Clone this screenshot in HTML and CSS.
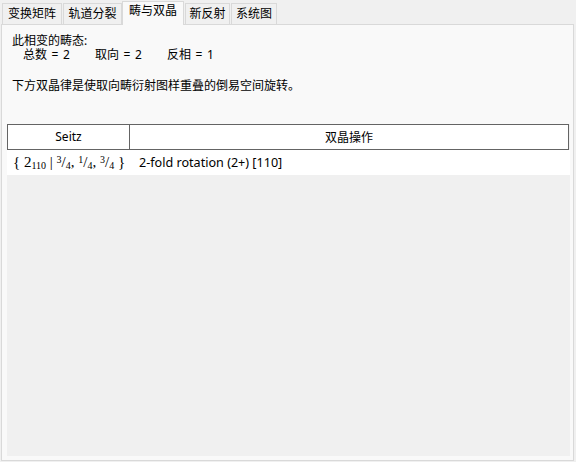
FILE: index.html
```html
<!DOCTYPE html>
<html>
<head>
<meta charset="utf-8">
<link rel="stylesheet" href="styles.css">
</head>
<body>
<div class="window">
  <div class="tabs">
    <div class="tab t1">变换矩阵</div>
    <div class="tab t2">轨道分裂</div>
    <div class="tab t3 active">畴与双晶</div>
    <div class="tab t4">新反射</div>
    <div class="tab t5">系统图</div>
  </div>
  <div class="pane">
    <div class="info">
      <div class="line">此相变的畴态:</div>
      <div class="line counts"><span class="c1">总数 = 2</span><span class="c2">取向 = 2</span><span class="c3">反相 = 1</span></div>
    </div>
    <div class="desc">下方双晶律是使取向畴衍射图样重叠的倒易空间旋转。</div>
    <div class="list">
      <div class="head">
        <div class="hcell seitz">Seitz</div>
        <div class="hcell op">双晶操作</div>
      </div>
      <div class="row">
        <div class="cell seitz-val"><span class="math">{ 2<sub>110</sub> | <sup>3</sup>/<sub>4</sub>, <sup>1</sup>/<sub>4</sub>, <sup>3</sup>/<sub>4</sub> }</span></div>
        <div class="cell op-val">2-fold rotation (2+) [110]</div>
      </div>
      <div class="empty"></div>
    </div>
  </div>
  <svg class="grip" width="4" height="4" viewBox="0 0 4 4"><rect x="2" y="0" width="1" height="1" fill="#555"/><rect x="0" y="2" width="1" height="1" fill="#555"/><rect x="2" y="2" width="1" height="1" fill="#555"/></svg>
</div>
</body>
</html>
```
FILE: styles.css
```css
html, body {
  margin: 0;
  padding: 0;
  background: #f0f0f0;
}
body {
  width: 576px;
  height: 462px;
  overflow: hidden;
  font-family: "Noto Sans", "Noto Sans CJK SC", sans-serif;
  font-size: 12px;
  color: #000;
}
.window {
  position: relative;
  width: 576px;
  height: 462px;
}
.tabs {
  display: flex;
  align-items: flex-end;
  height: 24px;
  padding-left: 2px;
  box-sizing: border-box;
}
.tab {
  box-sizing: border-box;
  height: 21px;
  border: 1px solid #d9d9d9;
  border-bottom: none;
  background: #f0f0f0;
  display: flex;
  align-items: center;
  justify-content: center;
  line-height: 14px;
  padding-bottom: 1px;
}
.t1 { width: 60px; }
.t2 { width: 59px; margin-left: 1px; }
.t3 { width: 62px; margin-left: 0; }
.t4 { width: 45px; margin-left: 1px; }
.t5 { width: 46px; margin-left: 1px; }
.tab.active {
  height: 24px;
  margin-bottom: -1px;
  background: #f9f9f9;
  position: relative;
  z-index: 2;
  padding-bottom: 5px;
}
.pane {
  box-sizing: border-box;
  margin-left: 1px;
  width: 573px;
  height: 437px;
  border: 1px solid #d9d9d9;
  background: #f9f9f9;
  display: flex;
  flex-direction: column;
  position: relative;
  z-index: 1;
}
.info {
  padding: 9px 0 0 10px;
  line-height: 14px;
}
.counts {
  display: flex;
  padding-left: 11px;
  word-spacing: 1.5px;
}
.c1 { width: 72px; }
.c2 { width: 72px; }
.desc {
  padding: 17px 0 0 10px;
  line-height: 14px;
}
.list {
  margin: 31px 3px 4px 5px;
  flex: 1;
  display: flex;
  flex-direction: column;
  background: #f0f0f0;
}
.head {
  display: flex;
  height: 26px;
  box-sizing: border-box;
  border: 1px solid #646464;
  background: #ffffff;
  margin-right: 1px;
}
.hcell {
  display: flex;
  align-items: center;
  justify-content: center;
  padding-bottom: 1px;
}
.seitz {
  width: 121px;
  border-right: 1px solid #646464;
}
.op {
  flex: 1;
}
.row {
  display: flex;
  height: 25px;
  background: #ffffff;
  align-items: center;
}
.cell {
  display: flex;
  align-items: center;
}
.seitz-val {
  width: 123px;
  padding-left: 6px;
  box-sizing: border-box;
}
.math {
  font-family: "Liberation Serif", "DejaVu Serif", serif;
  font-size: 15px;
  white-space: nowrap;
}
.math sub, .math sup {
  font-size: 10px;
}
.math sup {
  vertical-align: 4px;
}
.math sub {
  vertical-align: -2px;
}
.op-val {
  padding-left: 9px;
  font-family: "Noto Sans", "Liberation Sans", sans-serif;
  font-size: 12.6px;
}
.empty {
  flex: 1;
}
.grip {
  position: absolute;
  right: 1px;
  bottom: 1px;
}
```
